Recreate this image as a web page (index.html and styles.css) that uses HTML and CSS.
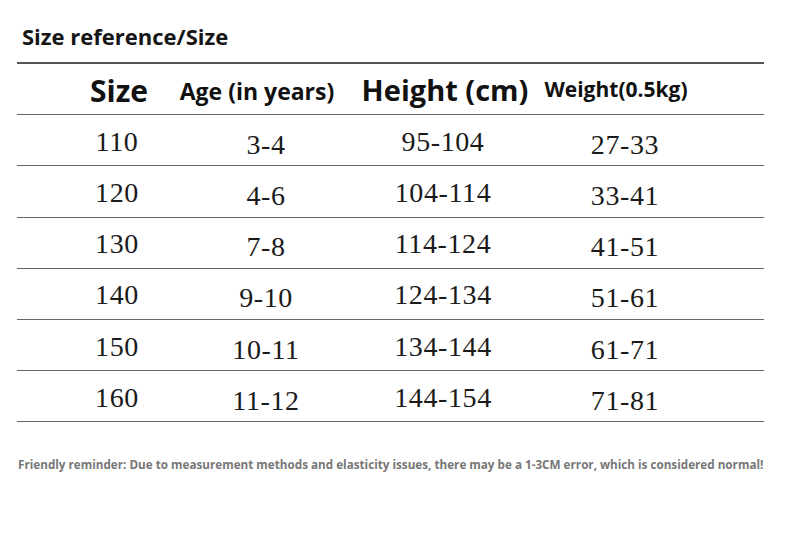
FILE: index.html
```html
<!DOCTYPE html>
<html>
<head>
<meta charset="utf-8">
<link rel="stylesheet" href="styles.css">
</head>
<body>
<div class="page">
  <h1 class="title">Size reference/Size</h1>
  <div class="table">
    <div class="row head">
      <div class="cell c1"><span class="h-size">Size</span></div>
      <div class="cell c2"><span class="h-age">Age (in years)</span></div>
      <div class="cell c3"><span class="h-height">Height (cm)</span></div>
      <div class="cell c4"><span class="h-weight">Weight(0.5kg)</span></div>
    </div>
    <div class="row">
      <div class="cell c1">110</div><div class="cell c2 low">3-4</div><div class="cell c3">95-104</div><div class="cell c4 low">27-33</div>
    </div>
    <div class="row">
      <div class="cell c1">120</div><div class="cell c2 low">4-6</div><div class="cell c3">104-114</div><div class="cell c4 low">33-41</div>
    </div>
    <div class="row">
      <div class="cell c1">130</div><div class="cell c2 low">7-8</div><div class="cell c3">114-124</div><div class="cell c4 low">41-51</div>
    </div>
    <div class="row">
      <div class="cell c1">140</div><div class="cell c2 low">9-10</div><div class="cell c3">124-134</div><div class="cell c4 low">51-61</div>
    </div>
    <div class="row">
      <div class="cell c1">150</div><div class="cell c2 low">10-11</div><div class="cell c3">134-144</div><div class="cell c4 low">61-71</div>
    </div>
    <div class="row">
      <div class="cell c1">160</div><div class="cell c2 low">11-12</div><div class="cell c3">144-154</div><div class="cell c4 low">71-81</div>
    </div>
  </div>
  <p class="note">Friendly reminder: Due to measurement methods and elasticity issues, there may be a 1-3CM error, which is considered normal!</p>
</div>
</body>
</html>
```

FILE: styles.css
```css
* { box-sizing: border-box; }
html, body { margin: 0; padding: 0; background: #fff; }
body { width: 790px; height: 550px; overflow: hidden; }

.page {
  padding: 17px 26px 0 17px;
  font-family: "Open Sans", "Noto Sans", sans-serif;
  color: #111;
}

.title {
  margin: 0 0 0 5px;
  height: 45px;
  font-size: 22px;
  font-weight: 700;
  line-height: 38px;
  color: #161616;
}

.table {
  border-top: 2px solid #555;
}

.row {
  display: grid;
  grid-template-columns: 200px 98px 256px 108px 1fr;
  height: 51.2px;
  border-bottom: 1px solid #666;
  font-family: "Liberation Serif", "DejaVu Serif", serif;
  font-size: 28px;
  color: #1a1a1a;
  letter-spacing: 0.6px;
}

.cell {
  display: flex;
  justify-content: center;
  align-items: center;
  white-space: nowrap;
  padding-top: 3px;
}

.cell.low { padding-top: 9px; }

.head {
  font-family: "Open Sans", "Noto Sans", sans-serif;
  font-weight: 700;
  letter-spacing: 0;
  color: #111;
}
.head .cell { align-items: flex-end; padding-top: 0; }
.head .c1 { padding-left: 4px; padding-bottom: 8px; }
.head .c2 { padding-right: 18px; padding-bottom: 11px; }
.head .c3 { padding-left: 4px; padding-bottom: 10px; }
.head .c4 { padding-right: 18px; padding-bottom: 14px; }

.h-size { font-size: 30px; line-height: 1; }
.h-age { font-size: 23px; line-height: 1; }
.h-height { font-size: 29px; line-height: 1; }
.h-weight { font-size: 21px; line-height: 1; }

.note {
  margin: 34px 0 0 1px;
  font-size: 11.7px;
  font-weight: 700;
  color: #777;
  white-space: nowrap;
}
```
